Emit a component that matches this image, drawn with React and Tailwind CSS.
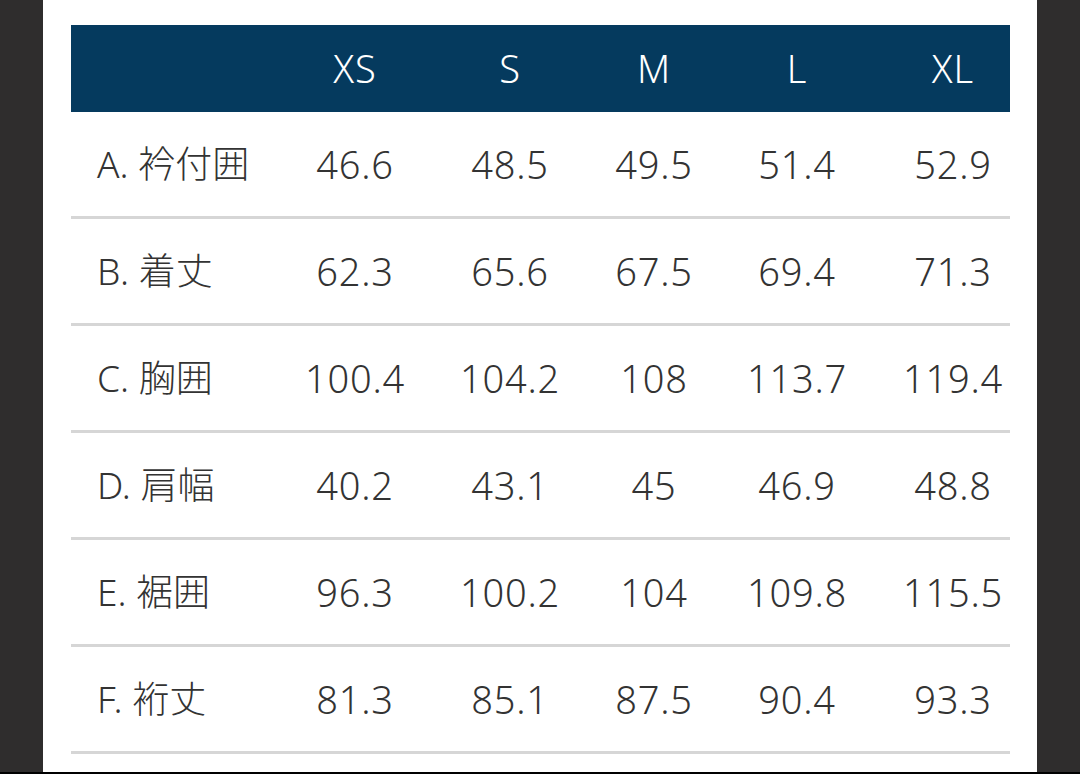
import React from 'react';

const sizes = ['XS', 'S', 'M', 'L', 'XL'];

const rows = [
  { label: 'A. 衿付囲', values: ['46.6', '48.5', '49.5', '51.4', '52.9'] },
  { label: 'B. 着丈', values: ['62.3', '65.6', '67.5', '69.4', '71.3'] },
  { label: 'C. 胸囲', values: ['100.4', '104.2', '108', '113.7', '119.4'] },
  { label: 'D. 肩幅', values: ['40.2', '43.1', '45', '46.9', '48.8'] },
  { label: 'E. 裾囲', values: ['96.3', '100.2', '104', '109.8', '115.5'] },
  { label: 'F. 裄丈', values: ['81.3', '85.1', '87.5', '90.4', '93.3'] },
];

const grid = 'grid grid-cols-[207px_154px_156px_132px_154px_136px]';

const App = () => {
  return (
    <div
      className="w-[1080px] h-[774px] bg-[#2f2d2d] overflow-hidden flex flex-col"
      style={{ fontFamily: '"Noto Sans", "Noto Sans CJK JP", sans-serif' }}
    >
      <div className="flex flex-1">
        <div className="ml-[43px] w-[994px] h-[772px] bg-white pt-[25px] pl-[28px]">
          <div className="w-[939px]">
            {/* Header */}
            <div className={`${grid} h-[87px] bg-[#053a5e] items-center text-white text-[38px] tracking-[1px] font-light`}>
              <div />
              {sizes.map((s, i) => (
                <div key={s} className={`text-center ${i === 4 ? 'pl-[22px]' : ''}`}>
                  {s}
                </div>
              ))}
            </div>

            {/* Rows */}
            {rows.map((row) => (
              <div
                key={row.label}
                className={`${grid} h-[107px] border-b-[3px] border-[#d6d6d6] items-center text-[#333333] font-light`}
              >
                <div className="pl-[26px] whitespace-nowrap text-[37px]">{row.label}</div>
                {row.values.map((v, i) => (
                  <div key={i} className={`text-center text-[38px] tracking-[0.8px] ${i === 4 ? 'pl-[22px]' : ''}`}>
                    {v}
                  </div>
                ))}
              </div>
            ))}
          </div>
        </div>
      </div>
      <div className="h-[2px] bg-black" />
    </div>
  );
};

export default App;
